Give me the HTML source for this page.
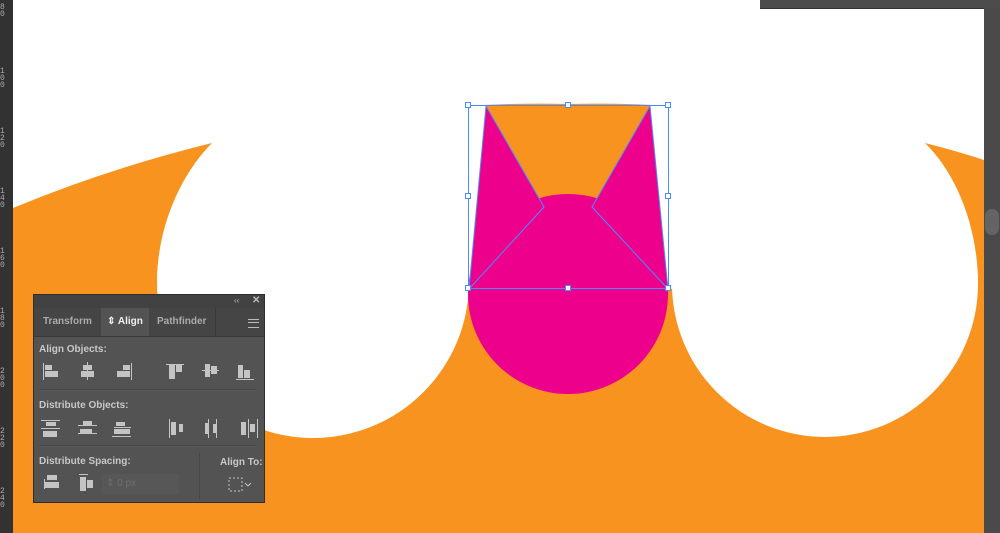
<!DOCTYPE html>
<html><head><meta charset="utf-8"><style>
body{margin:0;width:1000px;height:533px;overflow:hidden;background:#fff;position:relative;font-family:"Liberation Sans",sans-serif}
#ruler{position:absolute;left:0;top:0;width:13px;height:533px;background:#323232}
#ruler span{position:absolute;left:0;font:8px/7px "Liberation Mono",monospace;color:#aaa;width:8px;word-break:break-all}
#sb{position:absolute;right:0;top:8px;width:16px;height:525px;background:#4a4a4a}
#sb i{position:absolute;left:1px;top:201px;width:14px;height:26px;border-radius:7px;background:#646464}
#topbar{position:absolute;left:760px;top:0;width:240px;height:8px;background:#4c4c4c;border-bottom:1px solid #333}
#panel{position:absolute;left:33px;top:294px;width:232px;height:209px;background:#535353;border:1px solid #2e2e2e;box-sizing:border-box;color:#cfcfcf;font-size:10px}
.hd{height:13px;background:#424242}
.tabs{height:28px;background:#454545;position:relative;border-bottom:1px solid #3a3a3a}
.tab{position:absolute;top:0;height:28px;line-height:27px;font-size:10px;font-weight:bold;color:#aaa}
.sec{position:absolute;left:5px;font-size:10px;font-weight:bold;color:#c8c8c8}
.hr{position:absolute;left:5px;right:8px;height:1px;background:#454545;border-bottom:1px solid #5c5c5c}
svg.ic{position:absolute}
</style></head><body>
<svg width="1000" height="533" style="position:absolute;left:0;top:0">
<path d="M13,208 Q110,168 212,143 Q400,100 568,104 Q740,100 925,143 Q960,152 984,160 L984,533 L13,533 Z" fill="#f7931e"/>
<path d="M212,143 C185,170 158,220 157,280 L313,282 L469,289 L486,106 L486,0 L212,0 Z" fill="#fff"/>
<path d="M925,143 C955,172 978,225 978,284 L825,284 L668,289 L650,106 L650,0 L925,0 Z" fill="#fff"/>
<circle cx="313" cy="282" r="156" fill="#fff"/>
<circle cx="825" cy="284" r="153" fill="#fff"/>
<circle cx="568" cy="294" r="100" fill="#ec008c"/>
<polygon points="486,106 544,207 568,294 469,289" fill="#ec008c"/>
<polygon points="650,106 592,207 568,294 668,289" fill="#ec008c"/>
<g stroke="#4a8cff" stroke-width="1" fill="none">
<rect x="468.5" y="105.5" width="200" height="183"/>
<polyline points="486,106 544,207 469,289"/>
<polyline points="650,106 592,207 668,289"/>
<line x1="486" y1="106" x2="469" y2="289"/><line x1="650" y1="106" x2="668" y2="289"/>
</g>
<g fill="#fff" stroke="#4a8cff">
<rect x="465.5" y="102.5" width="5" height="5"/><rect x="565.5" y="102.5" width="5" height="5"/><rect x="665.5" y="102.5" width="5" height="5"/>
<rect x="465.5" y="193.5" width="5" height="5"/><rect x="665.5" y="193.5" width="5" height="5"/>
<rect x="465.5" y="285.5" width="5" height="5"/><rect x="565.5" y="285.5" width="5" height="5"/><rect x="665.5" y="285.5" width="5" height="5"/>
</g>
</svg>
<div id="ruler">
<span style="top:4px">80</span><span style="top:68px">100</span><span style="top:128px">120</span><span style="top:188px">140</span><span style="top:248px">160</span><span style="top:308px">180</span><span style="top:368px">200</span><span style="top:428px">220</span><span style="top:488px">240</span>
</div>
<div id="topbar"></div>
<div id="sb"><i></i></div>
<div id="panel">
<div class="hd"><span style="position:absolute;left:200px;top:1px;font-size:8px;color:#bbb">‹‹</span><span style="position:absolute;left:218px;top:0px;font-size:10px;font-weight:bold;color:#bbb">✕</span></div>
<div class="tabs">
<div class="tab" style="left:9px">Transform</div>
<div class="tab" style="left:67px;width:48px;background:#535353;color:#eee;text-align:center">⇕ Align</div>
<div class="tab" style="left:123px">Pathfinder</div>
<div style="position:absolute;left:181px;top:0;width:1px;height:28px;background:#3a3a3a"></div>
<div style="position:absolute;left:214px;top:11px;width:11px;height:7px;border-top:1px solid #bbb;border-bottom:1px solid #bbb"></div>
<div style="position:absolute;left:214px;top:14px;width:11px;height:1px;background:#bbb"></div>
</div>
<div class="sec" style="top:49px">Align Objects:</div>
<svg class="ic" style="left:0;top:60px" width="232" height="30" fill="#c4c4c4">
<rect x="9" y="8" width="1" height="17"/><rect x="11" y="10" width="7" height="5"/><rect x="11" y="16" width="13" height="6"/>
<rect x="53" y="7" width="1" height="18"/><rect x="49" y="10" width="9" height="5"/><rect x="47" y="16" width="13" height="6"/>
<rect x="97" y="8" width="1" height="17"/><rect x="89" y="10" width="7" height="5"/><rect x="83" y="16" width="13" height="6"/>
<rect x="132" y="9" width="18" height="1"/><rect x="135" y="10" width="6" height="14"/><rect x="142" y="10" width="6" height="7"/>
<rect x="168" y="15" width="17" height="1"/><rect x="171" y="9" width="5" height="13"/><rect x="177" y="11" width="6" height="8"/>
<rect x="204" y="10" width="5" height="13"/><rect x="210" y="15" width="6" height="8"/><rect x="202" y="24" width="18" height="1"/>
</svg>
<div class="hr" style="top:94px"></div>
<div class="sec" style="top:105px">Distribute Objects:</div>
<svg class="ic" style="left:0;top:117px" width="232" height="30" fill="#c4c4c4">
<rect x="7" y="8" width="19" height="1"/><rect x="12" y="10" width="10" height="4"/><rect x="7" y="16" width="19" height="1"/><rect x="9" y="19" width="14" height="6"/>
<rect x="44" y="13" width="19" height="1"/><rect x="49" y="9" width="9" height="4"/><rect x="44" y="21" width="19" height="1"/><rect x="46" y="17" width="12" height="4"/>
<rect x="82" y="10" width="9" height="4"/><rect x="80" y="15" width="17" height="1"/><rect x="80" y="17" width="16" height="5"/><rect x="78" y="24" width="19" height="1"/>
<rect x="135" y="7" width="1" height="19"/><rect x="137" y="10" width="5" height="13"/><rect x="145" y="12" width="4" height="8"/>
<rect x="174" y="7" width="1" height="19"/><rect x="171" y="11" width="4" height="11"/><rect x="182" y="7" width="1" height="19"/><rect x="179" y="12" width="4" height="9"/>
<rect x="207" y="10" width="5" height="13"/><rect x="214" y="7" width="1" height="19"/><rect x="216" y="12" width="5" height="8"/><rect x="223" y="7" width="1" height="19"/>
</svg>
<div class="hr" style="top:150px"></div>
<div class="sec" style="top:161px">Distribute Spacing:</div>
<div style="position:absolute;left:165px;top:158px;width:1px;height:46px;background:#474747"></div>
<div class="sec" style="top:162px;left:186px">Align To:</div>
<svg class="ic" style="left:0;top:178px" width="232" height="26" fill="#c4c4c4">
<rect x="10" y="6" width="1" height="10"/><rect x="13" y="2" width="10" height="5"/><rect x="11" y="9" width="14" height="6"/>
<rect x="46" y="4" width="6" height="14"/><rect x="53" y="7" width="6" height="8"/><rect x="45" y="1" width="9" height="1"/>
<rect x="68" y="1" width="77" height="20" fill="#575757"/>
<rect x="195" y="5" width="13" height="13" fill="none" stroke="#c4c4c4" stroke-dasharray="2,2"/>
<path d="M211,10 l3,3 l3,-3" fill="none" stroke="#c4c4c4"/>
</svg>
<div style="position:absolute;left:72px;top:183px;color:#6e6e6e;font-size:10px">⇕ 0 px</div>
</div>
</body></html>
